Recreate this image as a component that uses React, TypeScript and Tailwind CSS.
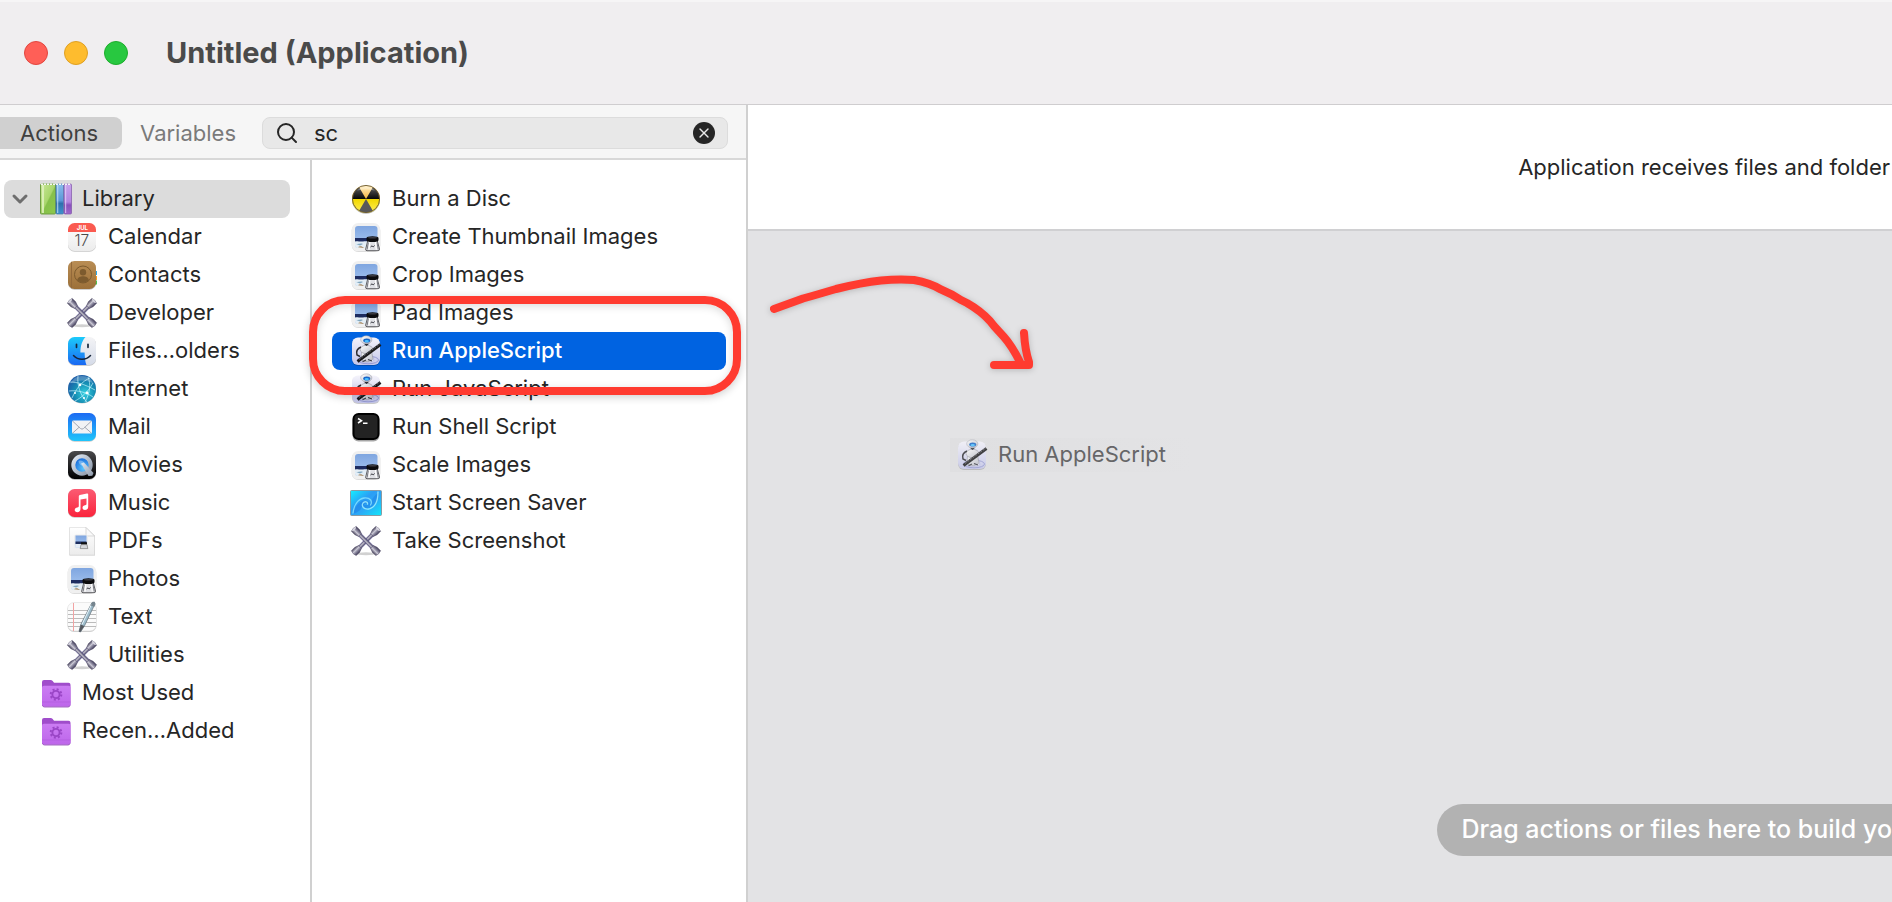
import React, { useState } from 'react';
import { ChevronDown, Search, X } from 'lucide-react';

type IconName =
  | 'library'
  | 'calendar'
  | 'contacts'
  | 'tools'
  | 'finder'
  | 'internet'
  | 'mail'
  | 'movies'
  | 'music'
  | 'pdf'
  | 'preview'
  | 'text'
  | 'folder'
  | 'burn'
  | 'automator'
  | 'terminal'
  | 'screensaver';

interface Item {
  label: string;
  icon: IconName;
}

const categories: Item[] = [
  { label: 'Calendar', icon: 'calendar' },
  { label: 'Contacts', icon: 'contacts' },
  { label: 'Developer', icon: 'tools' },
  { label: 'Files…olders', icon: 'finder' },
  { label: 'Internet', icon: 'internet' },
  { label: 'Mail', icon: 'mail' },
  { label: 'Movies', icon: 'movies' },
  { label: 'Music', icon: 'music' },
  { label: 'PDFs', icon: 'pdf' },
  { label: 'Photos', icon: 'preview' },
  { label: 'Text', icon: 'text' },
  { label: 'Utilities', icon: 'tools' },
];

const smartFolders: Item[] = [
  { label: 'Most Used', icon: 'folder' },
  { label: 'Recen…Added', icon: 'folder' },
];

const actions: Item[] = [
  { label: 'Burn a Disc', icon: 'burn' },
  { label: 'Create Thumbnail Images', icon: 'preview' },
  { label: 'Crop Images', icon: 'preview' },
  { label: 'Pad Images', icon: 'preview' },
  { label: 'Run AppleScript', icon: 'automator' },
  { label: 'Run JavaScript', icon: 'automator' },
  { label: 'Run Shell Script', icon: 'terminal' },
  { label: 'Scale Images', icon: 'preview' },
  { label: 'Start Screen Saver', icon: 'screensaver' },
  { label: 'Take Screenshot', icon: 'tools' },
];

// Shared gradients, referenced by every icon below
const IconDefs: React.FC = () => (
  <svg className="absolute size-0" aria-hidden="true">
    <defs>
      <linearGradient id="green" x1="0" x2="1" y1="0" y2="1">
        <stop offset="0" stopColor="#c9e89a" />
        <stop offset="0.5" stopColor="#a9d66c" />
        <stop offset="0.55" stopColor="#86c04a" />
        <stop offset="1" stopColor="#8cc94c" />
      </linearGradient>
      <linearGradient id="blueBook" x1="0" x2="0" y1="0" y2="1">
        <stop offset="0" stopColor="#8bbdec" />
        <stop offset="0.55" stopColor="#5a98d8" />
        <stop offset="0.65" stopColor="#2f6fae" />
        <stop offset="1" stopColor="#3f93cf" />
      </linearGradient>
      <linearGradient id="purpleBook" x1="0" x2="0" y1="0" y2="1">
        <stop offset="0" stopColor="#c7a3ec" />
        <stop offset="0.6" stopColor="#b486e0" />
        <stop offset="0.7" stopColor="#8a50bd" />
        <stop offset="1" stopColor="#9d68cc" />
      </linearGradient>
      <linearGradient id="paper" x1="0" x2="0" y1="0" y2="1">
        <stop offset="0" stopColor="#ffffff" />
        <stop offset="1" stopColor="#ececec" />
      </linearGradient>
      <linearGradient id="leather" x1="0" x2="0" y1="0" y2="1">
        <stop offset="0" stopColor="#b98d54" />
        <stop offset="1" stopColor="#9c7039" />
      </linearGradient>
      <linearGradient id="finderBlue" x1="0" x2="0" y1="0" y2="1">
        <stop offset="0" stopColor="#1ccbfb" />
        <stop offset="1" stopColor="#1a68f2" />
      </linearGradient>
      <linearGradient id="finderGray" x1="0" x2="0" y1="0" y2="1">
        <stop offset="0" stopColor="#f4f4f6" />
        <stop offset="1" stopColor="#d5dbe8" />
      </linearGradient>
      <radialGradient id="globe" cx="0.6" cy="0.65" r="0.65">
        <stop offset="0" stopColor="#35d0e0" />
        <stop offset="0.55" stopColor="#168fb4" />
        <stop offset="1" stopColor="#1d5fa8" />
      </radialGradient>
      <linearGradient id="mailBlue" x1="0" x2="0" y1="0" y2="1">
        <stop offset="0" stopColor="#1d6bf3" />
        <stop offset="1" stopColor="#1fc5fb" />
      </linearGradient>
      <linearGradient id="black" x1="0" x2="0" y1="0" y2="1">
        <stop offset="0" stopColor="#4a4a4c" />
        <stop offset="0.6" stopColor="#1c1c1e" />
        <stop offset="1" stopColor="#000000" />
      </linearGradient>
      <linearGradient id="ring" x1="0" x2="1" y1="0" y2="1">
        <stop offset="0" stopColor="#e0e8f2" />
        <stop offset="1" stopColor="#8b97a8" />
      </linearGradient>
      <radialGradient id="lens" cx="0.6" cy="0.7" r="0.7">
        <stop offset="0" stopColor="#5cc8ff" />
        <stop offset="1" stopColor="#0f5fd6" />
      </radialGradient>
      <linearGradient id="musicRed" x1="0" x2="0" y1="0" y2="1">
        <stop offset="0" stopColor="#fb5b73" />
        <stop offset="1" stopColor="#fa243c" />
      </linearGradient>
      <linearGradient id="sky" x1="0" x2="0" y1="0" y2="1">
        <stop offset="0" stopColor="#7fa6e0" />
        <stop offset="1" stopColor="#aac8f2" />
      </linearGradient>
      <linearGradient id="steel" x1="0" x2="1" y1="0" y2="0">
        <stop offset="0" stopColor="#4d4960" />
        <stop offset="0.4" stopColor="#c9c7d4" />
        <stop offset="0.65" stopColor="#86839a" />
        <stop offset="1" stopColor="#45415c" />
      </linearGradient>
      <linearGradient id="folderFront" x1="0" x2="0" y1="0" y2="1">
        <stop offset="0" stopColor="#cb7cf3" />
        <stop offset="1" stopColor="#bd66ea" />
      </linearGradient>
      <linearGradient id="burnTop" x1="0" x2="0" y1="0" y2="1">
        <stop offset="0" stopColor="#fff0c8" />
        <stop offset="0.5" stopColor="#f6b73c" />
        <stop offset="0.51" stopColor="#f2d800" />
        <stop offset="1" stopColor="#fff05a" />
      </linearGradient>
      <linearGradient id="burnBlack" x1="0" x2="0" y1="0" y2="1">
        <stop offset="0" stopColor="#5a5a5a" />
        <stop offset="1" stopColor="#080808" />
      </linearGradient>
      <linearGradient id="lavender" x1="0" x2="0" y1="0" y2="1">
        <stop offset="0" stopColor="#f4f3fb" />
        <stop offset="1" stopColor="#c4c6ea" />
      </linearGradient>
      <linearGradient id="robot" x1="0" x2="1" y1="0" y2="1">
        <stop offset="0" stopColor="#ffffff" />
        <stop offset="1" stopColor="#bcbdc8" />
      </linearGradient>
      <linearGradient id="swirl" x1="0" x2="1" y1="0" y2="1">
        <stop offset="0" stopColor="#14f0ff" />
        <stop offset="0.4" stopColor="#2b9df4" />
        <stop offset="0.6" stopColor="#2ba9f6" />
        <stop offset="1" stopColor="#10e8fa" />
      </linearGradient>
    </defs>
  </svg>
);

const Wrench: React.FC<{ angle: number }> = ({ angle }) => (
  <g transform={`rotate(${angle} 16 16)`}>
    <rect x="14.2" y="4" width="3.6" height="24" fill="url(#steel)" stroke="#5d559c" strokeWidth="0.5" />
    <path d="M12.6 -1.2q3.4-1.6 6.800 0v4.800l-1.400 4h-4l-1.400-4z" fill="url(#steel)" stroke="#4f4b66" strokeWidth="0.5" />
    <path d="M12.6 33.2q3.4 1.6 6.800 0v-4.800l-1.400-4h-4l-1.400 4z" fill="url(#steel)" stroke="#4f4b66" strokeWidth="0.5" />
    <ellipse cx="16" cy="-0.9" rx="2.600" ry="0.900" fill="#d9d8e2" />
  </g>
);

const drawings: Record<IconName, React.ReactNode> = {
  library: (
    <>
      <rect x="0.5" y="1" width="15" height="30" rx="1" fill="url(#green)" stroke="#6f9c45" />
      <rect x="2" y="2" width="2" height="28" fill="#e3f3c4" opacity="0.8" />
      <rect x="16" y="1" width="7.5" height="30" rx="1" fill="url(#blueBook)" stroke="#4277a8" strokeWidth="0.7" />
      <rect x="17" y="2" width="1.3" height="28" fill="#c7e0f7" opacity="0.7" />
      <rect x="24" y="1" width="7.5" height="30" rx="1" fill="url(#purpleBook)" stroke="#7f56a8" strokeWidth="0.7" />
      <rect x="25" y="2" width="1.2" height="28" fill="#e6d4f8" opacity="0.7" />
      <path d="M1 1.3h30" stroke="#f5f5f5" strokeWidth="1.6" strokeDasharray="2 1" />
    </>
  ),
  calendar: (
    <>
      <rect x="2" y="2.7" width="28" height="28" rx="6.5" fill="#000" opacity="0.22" />
      <rect x="2" y="2" width="28" height="28" rx="6.5" fill="url(#paper)" />
      <path d="M2 11V8.5A6.5 6.5 0 0 1 8.5 2h15A6.5 6.5 0 0 1 30 8.5V11z" fill="#fa5a50" />
      <text x="16.3" y="9.2" textAnchor="middle" fill="#fff" fontSize="6" fontWeight="700" fontFamily="Inter, sans-serif">JUL</text>
      <text x="15.8" y="25" textAnchor="middle" fill="#4c4c4c" fontSize="15.5" fontWeight="300" fontFamily="Inter, sans-serif">17</text>
    </>
  ),
  contacts: (
    <>
      <path d="M29 12h2v4h-2z" fill="#2aa8e8" />
      <path d="M29 17h2v4h-2z" fill="#f59a23" />
      <path d="M29 21.5h2v4h-2z" fill="#4fc04f" />
      <rect x="2" y="2.7" width="28" height="28" rx="6.5" fill="#000" opacity="0.25" />
      <rect x="2" y="2" width="28" height="28" rx="6.5" fill="url(#leather)" />
      <path d="M5.5 2.8v26.4" stroke="#93693a" strokeWidth="1" />
      <circle cx="17" cy="15.5" r="8.5" fill="none" stroke="#7d5b2e" strokeWidth="1" />
      <circle cx="17" cy="13.3" r="3.2" fill="#7d5b2e" />
      <path d="M11 21.3c1-3.2 3.5-4 6-4s5 .8 6 4c-3.500 3.200-8.500 3.200-12 0z" fill="#7d5b2e" />
    </>
  ),
  tools: (
    <>
      <ellipse cx="16" cy="28.8" rx="10" ry="1.5" fill="#000" opacity="0.18" />
      <Wrench angle={45} />
      <Wrench angle={-45} />
    </>
  ),
  finder: (
    <>
      <rect x="2" y="2.7" width="28" height="28" rx="6.5" fill="#000" opacity="0.25" />
      <rect x="2" y="2" width="28" height="28" rx="6.5" fill="url(#finderGray)" />
      <path d="M19.500 2H8.500A6.500 6.500 0 0 0 2 8.500v15A6.500 6.500 0 0 0 8.500 30H20.500c-1-2.500-1.700-6-1.900-12.500h-4.200c0-7 2.100-12.500 5.100-15.500z" fill="url(#finderBlue)" />
      <path d="M10.5 9.300v3M22 9.300v3" stroke="#16263c" strokeWidth="1.7" strokeLinecap="round" />
      <path d="M7.5 20.500c4.500 5 12.500 5 17 0" fill="none" stroke="#16263c" strokeWidth="1.5" strokeLinecap="round" />
    </>
  ),
  internet: (
    <>
      <circle cx="16" cy="16.6" r="14" fill="#000" opacity="0.2" />
      <circle cx="16" cy="16" r="14" fill="url(#globe)" />
      <g fill="none" stroke="#c8f6ff" strokeWidth="0.9" opacity="0.75">
        <path d="M4 9c7 0 14 2 25 8M6 25c4-9 10-17 18-20M12 3c-1 9 2 19 9 26M22 4c3 7 2 16-3 25M3 18c8-1 17 1 24 6M9 28c6-3 13-9 18-18" />
      </g>
      <circle cx="14" cy="12" r="1.3" fill="#fff" />
      <circle cx="21" cy="20" r="1.4" fill="#fff" />
      <circle cx="18" cy="25" r="1.1" fill="#fff" />
      <circle cx="9" cy="20" r="1" fill="#fff" />
      <path d="M4.5 10.500a12.500 12.500 0 0 1 23 0c-7-4-16-4-23 0z" fill="#fff" opacity="0.22" />
    </>
  ),
  mail: (
    <>
      <rect x="2" y="2.7" width="28" height="28" rx="6.5" fill="#000" opacity="0.22" />
      <rect x="2" y="2" width="28" height="28" rx="6.5" fill="url(#mailBlue)" />
      <rect x="6" y="9.5" width="20" height="13" rx="1.5" fill="#f1f2f5" />
      <path d="M6.5 10l8 7.500q1.500 1.300 3 0l8-7.500M6.500 22.200l6.700-6M25.500 22.200l-6.700-6" fill="none" stroke="#a2a8b4" strokeWidth="1" />
    </>
  ),
  movies: (
    <>
      <rect x="2" y="2.7" width="28" height="28" rx="6.5" fill="#000" opacity="0.3" />
      <rect x="2" y="2" width="28" height="28" rx="6.5" fill="url(#black)" />
      <circle cx="16" cy="16" r="8.7" fill="url(#lens)" stroke="url(#ring)" strokeWidth="4" />
      <path d="M15 14.500l3-1 9.500 10.500-1.200 2.800-3.800.2z" fill="url(#ring)" />
      <path d="M12.5 12c2.500-1 4.500 0 6 2l-2.800 2.800c-2-1.300-3.200-3-3.200-4.800z" fill="#d3ecff" opacity="0.4" />
    </>
  ),
  music: (
    <>
      <rect x="2" y="2.7" width="28" height="28" rx="6.5" fill="#000" opacity="0.22" />
      <rect x="2" y="2" width="28" height="28" rx="6.5" fill="url(#musicRed)" />
      <path d="M12.8 9.300q0-1 1-1.200l7.200-1.500q1.200-.2 1.200 1V19.800c0 2.100-1.400 3.200-3.200 3.200-1.500 0-2.500-.9-2.500-2.200 0-1.500 1.100-2.200 2.600-2.500 1-.2 1.400-.5 1.400-1.300v-5.600l-6 1.200v9.200c0 2.200-1.300 3.400-3.200 3.400-1.500 0-2.600-.9-2.600-2.200 0-1.500 1.200-2.300 2.600-2.600 1-.2 1.500-.5 1.500-1.300z" fill="#fff" />
    </>
  ),
  pdf: (
    <>
      <path d="M3.500 3h17l8.500 8v19.500h-25.500z" fill="#000" opacity="0.2" />
      <path d="M3.500 2.500h16.500l8.500 8.500v19h-25z" fill="url(#paper)" stroke="#d9d9d9" strokeWidth="0.6" />
      <path d="M20 2.500v7q0 1.500 1.500 1.500h7z" fill="#fafafa" stroke="#c4c4c4" strokeWidth="0.6" />
      <rect x="8" y="9.5" width="14" height="14" rx="2.5" fill="#ededed" />
      <rect x="9.5" y="10.5" width="11" height="12" fill="url(#sky)" />
      <rect x="9.5" y="16.500" width="11" height="2.5" fill="#1d2d5c" />
      <rect x="9.5" y="19" width="11" height="3.5" fill="#e6edf5" />
      <path d="M15 17.300h6v2.300h-6z" fill="#111" />
      <path d="M15 19.600h6l.8 4h-7.600z" fill="#d5d7db" stroke="#555" strokeWidth="0.5" />
    </>
  ),
  preview: (
    <>
      <rect x="1.7" y="3" width="28.6" height="28" rx="6.5" fill="#000" opacity="0.16" />
      <rect x="1.7" y="2" width="28.6" height="28.3" rx="6.5" fill="#f0f0f0" />
      <rect x="5" y="5" width="22.500" height="22" rx="3" fill="url(#sky)" />
      <path d="M5 17h22.500v5H5z" fill="#1d2c60" />
      <path d="M5 20.500c3-1 4 .5 7 0s5-.5 15.500 0V24q0 3-3 3H8q-3 0-3-3z" fill="#e4eef6" />
      <path d="M5 22.500c3 1.500 5-1 8 .5l-3 1.500z" fill="#7ea5be" />
      <path d="M8 26.300c1.500-1.500 4-1.200 6 .7z" fill="#a8875c" />
      <path d="M17.800 19.500h9.400l2.300 8.500q.2 1.700-1.400 1.700H17q-1.600 0-1.300-1.700z" fill="#dfe0e4" stroke="#3c3c40" strokeWidth="0.8" />
      <path d="M18.300 21.500l-1.200 7M27 21.500l1.300 7" stroke="#77787f" strokeWidth="1" />
      <path d="M19.800 21l-.8 7.800M25.500 21l.8 7.800" stroke="#fff" strokeWidth="1.2" />
      <path d="M16.500 17q0-1.700 6-1.700t6 1.700v2q0 2-6 2t-6-2z" fill="#0b0b0d" />
      <ellipse cx="22.500" cy="16.8" rx="4.800" ry="0.800" fill="#3f3f46" />
      <path d="M20.500 26l1.600-1.200 1 1.200 1.600-1.500" fill="none" stroke="#2f3038" strokeWidth="0.9" />
    </>
  ),
  text: (
    <>
      <rect x="1.5" y="2.5" width="29" height="28.5" rx="6.5" fill="#000" opacity="0.2" />
      <rect x="1.5" y="1.5" width="29" height="28.5" rx="6.5" fill="#fbfbfb" stroke="#dedede" strokeWidth="0.6" />
      <path d="M2 9.500h28M2 13.500h28M2 17.500h28M2 21.500h28M2 25.500h28" stroke="#b3b3b3" strokeWidth="0.9" />
      <path d="M7.5 2v28" stroke="#f2a3a3" strokeWidth="1" />
      <path d="M26 1.500l3 1.300-10.500 22-4 6.200-1.500-.6 1.800-7z" fill="#9dbccb" stroke="#5c6b76" strokeWidth="0.7" />
      <path d="M25.5 3.500l-9.500 20" stroke="#e8f4fa" strokeWidth="1" />
      <path d="M14.8 23.400l3.500 1.500-4 6.100-1.200-.5z" fill="#55585e" />
      <path d="M24.8 4.500l3.400 1.400 1.300-3-.8-2.100-2-.1z" fill="#75848e" />
    </>
  ),
  folder: (
    <>
      <path d="M2 5q0-2 2-2h6.500q1.300 0 2.200 1l.9 1.200q.5.500 1.400.5H28.500q2 0 2 2V27.500q0 2-2 2H4q-2 0-2-2z" fill="#a04dcb" />
      <path d="M2 10.500q0-1.800 2-1.800H28.500q2 0 2 1.800V27.500q0 2-2 2H4q-2 0-2-2z" fill="url(#folderFront)" />
      <path d="M2 25h28.500" stroke="#a955d6" strokeWidth="0.7" opacity="0.7" />
      <path d="M2.5 28.500q.5 1.500 2 1.500h23.500q1.500 0 2-1.500" fill="none" stroke="#8f46b5" strokeWidth="0.8" />
      <circle cx="16" cy="17.500" r="3.600" fill="none" stroke="#9a46c6" strokeWidth="1.9" />
      <circle cx="16" cy="17.500" r="5.300" fill="none" stroke="#9a46c6" strokeWidth="2" strokeDasharray="2 2.163" />
    </>
  ),
  burn: (
    <>
      <circle cx="16" cy="16.8" r="14" fill="#000" opacity="0.3" />
      <circle cx="16" cy="16" r="14" fill="url(#burnTop)" />
      <path d="M16 16H2.300A13.700 13.700 0 0 1 9.150 4.140z" fill="url(#burnBlack)" />
      <path d="M16 16h13.700A13.700 13.700 0 0 0 22.850 4.140z" fill="url(#burnBlack)" />
      <path d="M16 16L9.150 27.860a13.700 13.700 0 0 0 13.700 0z" fill="#58585a" />
      <circle cx="16" cy="16" r="13.600" fill="none" stroke="#6b5a34" strokeWidth="0.9" />
      <path d="M7 7.500a12.500 12.500 0 0 1 18 0c-5-1.500-13-1.500-18 0z" fill="#fff" opacity="0.3" />
    </>
  ),
  automator: (
    <>
      <rect x="2" y="3.500" width="28" height="27.500" rx="6" fill="#000" opacity="0.2" />
      <rect x="2" y="2.500" width="28" height="27.500" rx="6" fill="url(#lavender)" />
      <ellipse cx="18" cy="25" rx="10.500" ry="3.800" fill="none" stroke="#8f93cf" strokeWidth="0.9" />
      <ellipse cx="17" cy="25" rx="7" ry="2.300" fill="#eeeefa" stroke="#a9acd8" strokeWidth="0.7" />
      <path d="M11.500 15l9.500-1 2 9.500c-1 3.500-10 4.500-12 .5z" fill="url(#robot)" stroke="#8e8f9c" strokeWidth="0.6" />
      <ellipse cx="16.500" cy="14.500" rx="6.500" ry="4.200" fill="url(#robot)" stroke="#8e8f9c" strokeWidth="0.6" />
      <path d="M11 12c-3.500 1.500-5 4.500-4 8l3 1.500" fill="none" stroke="#2b2b30" strokeWidth="1.5" />
      <path d="M13.500 8.500l3 2.500 3-2.500z" fill="#1f2026" />
      <ellipse cx="16.300" cy="4.800" rx="5.600" ry="4" fill="url(#robot)" stroke="#9b9ca8" strokeWidth="0.5" />
      <ellipse cx="16.700" cy="5.500" rx="3.500" ry="2.100" fill="#1766c9" />
      <ellipse cx="16.700" cy="6.200" rx="2.200" ry="1.100" fill="#49c0ff" />
      <path d="M7.500 26.500L30.500 9.500" stroke="#1a1a1c" strokeWidth="3" />
      <path d="M9 24.500L30 9" stroke="#8a8a92" strokeWidth="0.7" strokeDasharray="2 1.2" />
      <path d="M12.500 26.800l3.500-1.800M18 24.500l4 1.500" stroke="#3a3b44" strokeWidth="1.2" />
    </>
  ),
  terminal: (
    <>
      <rect x="2.5" y="3.500" width="27" height="27" rx="6" fill="#000" opacity="0.35" />
      <rect x="3.500" y="3" width="25" height="25" rx="5" fill="#232323" stroke="#000" strokeWidth="2" />
      <path d="M8 7.500l3.500 2.200L8 12M13 12.300h4.500" fill="none" stroke="#fff" strokeWidth="1.500" />
    </>
  ),
  screensaver: (
    <>
      <rect x="0.5" y="3.500" width="31" height="25" rx="1" fill="url(#swirl)" stroke="#8a9aa2" />
      <path d="M3 27c2-8 7-13 12-13.500 4-.3 6 2.500 4.500 4.500-2.500-3-7-1-8 2.500S6 26 3 27z" fill="#1c78e2" opacity="0.45" />
      <path d="M29 5.500c0 8-4 15-11.500 16-4 .5-6-2.500-4.500-5 2 3 6.500 1.500 8-2s4-7 8-9z" fill="#1c78e2" opacity="0.45" />
      <g fill="none" strokeLinecap="round">
        <path d="M28 5c0 7-2 15-9 17-5 1-8-3-6-6 1.500-2 5-1.500 4.500 1" stroke="#a9f4ff" strokeWidth="1.300" opacity="0.8" />
        <path d="M3 26c1-8 5-14 11-15 6-.8 9 3 6.500 7" stroke="#8be6ff" strokeWidth="1.300" opacity="0.8" />
      </g>
    </>
  ),
};

const Icon: React.FC<{ name: IconName }> = ({ name }) => (
  <svg className="size-8 shrink-0 overflow-visible" viewBox="0 0 32 32" aria-hidden="true">
    {drawings[name]}
  </svg>
);

const App: React.FC = () => {
  const [query, setQuery] = useState('sc');
  const [selected, setSelected] = useState('Run AppleScript');

  return (
    <div className="flex min-h-screen flex-col overflow-hidden bg-white font-['Inter',sans-serif] text-[22px] leading-7 text-[#262626]">
      <IconDefs />

      {/* Title bar */}
      <header className="flex h-[105px] shrink-0 items-center border-t-2 border-b border-t-[#f6f5f6] border-b-[#cfcdcf] bg-[#f0eef0] pb-px pl-6">
        <div className="flex gap-4">
          <button aria-label="Close" className="size-6 rounded-full border border-[#e2463f] bg-[#ff5f57]" />
          <button aria-label="Minimize" className="size-6 rounded-full border border-[#dfa023] bg-[#febc2e]" />
          <button aria-label="Zoom" className="size-6 rounded-full border border-[#1dad2c] bg-[#28c840]" />
        </div>
        <h1 className="ml-[38px] text-[29px] leading-9 font-bold text-[#4a4a4a]">Untitled (Application)</h1>
      </header>

      <div className="flex grow">
        <aside className="flex w-[748px] shrink-0 flex-col border-r-2 border-[#d0d0d0]">
          {/* Tabs and search */}
          <div className="flex items-center border-b-2 border-[#d8d8d8] bg-[#f6f6f6] pt-3 pr-[18px] pb-[9px]">
            <button className="h-8 rounded-r-lg bg-[#d0d0d0] pr-6 pl-5 text-[#404040]">Actions</button>
            <button className="h-8 px-[18px] text-[#7a7a7a]">Variables</button>
            <div className="ml-auto flex h-8 w-[466px] items-center rounded-lg border border-[#dcdcdc] bg-[#e8e8e8] px-3">
              <label htmlFor="action-search">
                <Search className="size-6" strokeWidth={2} aria-label="Search" />
              </label>
              <input
                id="action-search"
                type="text"
                value={query}
                onChange={(e) => setQuery(e.target.value)}
                className="ml-[15px] min-w-0 grow bg-transparent outline-none"
              />
              <button
                aria-label="Clear search"
                onClick={() => setQuery('')}
                className="flex size-[22px] items-center justify-center rounded-full bg-[#262626] text-[#e8e8e8]"
              >
                <X className="size-4" strokeWidth={2} />
              </button>
            </div>
          </div>

          <div className="flex grow">
            {/* Library tree */}
            <nav aria-label="Library" className="w-[312px] shrink-0 border-r-2 border-[#d0d0d0] pt-5 pr-5 pl-1">
              <button className="flex h-[38px] w-full items-center gap-2.5 rounded-lg bg-[#dcdcdc] pl-1">
                <ChevronDown className="-mr-0.5 size-6 text-[#6e6e6e]" strokeWidth={3} />
                <Icon name="library" />
                <span className="pb-0.5">Library</span>
              </button>
              <ul>
                {categories.map((item) => (
                  <li key={item.label}>
                    <button className="flex h-[38px] w-full items-center gap-2.5 pl-[62px]">
                      <Icon name={item.icon} />
                      <span className="pb-0.5">{item.label}</span>
                    </button>
                  </li>
                ))}
                {smartFolders.map((item) => (
                  <li key={item.label}>
                    <button className="flex h-[38px] w-full items-center gap-2.5 pl-9">
                      <Icon name={item.icon} />
                      <span className="pb-0.5">{item.label}</span>
                    </button>
                  </li>
                ))}
              </ul>
            </nav>

            {/* Matching actions */}
            <ul className="grow pt-5 pr-5 pl-5">
              {actions.map((item) => (
                <li key={item.label} className="relative">
                  <button
                    onClick={() => setSelected(item.label)}
                    className={`flex h-[38px] w-full items-center gap-2.5 rounded-lg pl-[18px] ${
                      selected === item.label ? 'bg-[#0063e1] font-medium text-white' : ''
                    }`}
                  >
                    <Icon name={item.icon} />
                    <span className="pb-0.5">{item.label}</span>
                  </button>
                  {item.label === 'Run AppleScript' && (
                    <div className="pointer-events-none absolute -top-9 -right-[15px] -bottom-[25px] -left-[23px] z-10 rounded-[36px] border-8 border-[#ff3b30] shadow-[0_2px_8px_rgba(0,0,0,0.2),inset_0_2px_8px_rgba(0,0,0,0.15)]" />
                  )}
                </li>
              ))}
            </ul>
          </div>
        </aside>

        {/* Workflow */}
        <main className="flex min-w-0 grow flex-col">
          <div className="flex h-[126px] shrink-0 items-center justify-end overflow-hidden border-b-2 border-[#d0d0d2] pr-0.5">
            <p className="whitespace-nowrap">Application receives files and folder</p>
          </div>
          <div className="relative flex grow flex-col justify-end overflow-hidden bg-[#e3e3e5]">
            <svg className="absolute top-0 left-0 h-[180px] w-[320px] drop-shadow-[0_1px_3px_rgba(0,0,0,0.2)]" viewBox="748 231 320 180" aria-hidden="true">
              <g fill="none" stroke="#ff3b30" strokeWidth="8" strokeLinecap="round" strokeLinejoin="round">
                <path d="M774 309L803 298.500L812 296L836 289Q862 282.500 881 280.500Q898 279 914 280Q930 283 940 289Q952 294 961 300L967 303Q981 311 990 321L994 326L1004 337Q1012 346 1020 362" />
                <path d="M1024 333Q1025 350 1029 362V365H994" />
              </g>
            </svg>
            <div className="absolute top-[207px] left-[202px] flex h-[34px] w-[240px] items-center gap-2.5 bg-linear-to-r from-[#dfdfe1] to-[#e3e3e5] pl-1.5 whitespace-nowrap">
              <span className="opacity-80">
                <Icon name="automator" />
              </span>
              <span className="pb-0.5 text-[#666668]">Run AppleScript</span>
            </div>
            <div className="mb-[46px] ml-auto flex h-[52px] items-center rounded-l-full bg-[#b2b2b2] pb-0.5 pl-6 text-[25px] font-medium whitespace-nowrap text-white">
              Drag actions or files here to build yo
            </div>
          </div>
        </main>
      </div>
    </div>
  );
};

export default App;
